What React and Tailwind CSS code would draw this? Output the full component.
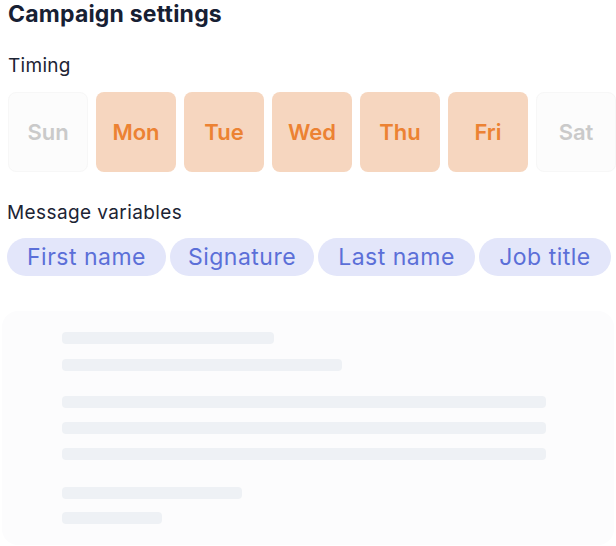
import React from 'react';

const days = [
  { label: 'Sun', active: false },
  { label: 'Mon', active: true },
  { label: 'Tue', active: true },
  { label: 'Wed', active: true },
  { label: 'Thu', active: true },
  { label: 'Fri', active: true },
  { label: 'Sat', active: false },
];

const variables = [
  { label: 'First name', width: 'w-[159px]' },
  { label: 'Signature', width: 'w-[144px]' },
  { label: 'Last name', width: 'w-[157px]' },
  { label: 'Job title', width: 'w-[132px]' },
];

// skeleton lines of the message preview
const lines = [
  { width: 'w-[212px]', gap: 'mt-0' },
  { width: 'w-[280px]', gap: 'mt-[15px]' },
  { width: 'w-[484px]', gap: 'mt-[25px]' },
  { width: 'w-[484px]', gap: 'mt-[14px]' },
  { width: 'w-[484px]', gap: 'mt-[14px]' },
  { width: 'w-[180px]', gap: 'mt-[27px]' },
  { width: 'w-[100px]', gap: 'mt-[13px]' },
];

export default function App() {
  return (
    <div className="w-[616px] h-[546px] bg-white overflow-hidden font-['Inter',sans-serif]">
      <h1 className="pl-2 text-[23px] leading-7 font-bold text-[#172033] tracking-[0.2px]">Campaign settings</h1>

      <p className="pl-2 mt-[26px] text-[19px] leading-6 text-[#1c2434] tracking-[0.3px]">Timing</p>

      {/* Day selector */}
      <div className="flex gap-2 pl-2 mt-[14px]">
        {days.map(day => (
          <div
            key={day.label}
            className={`w-20 h-20 shrink-0 rounded-lg flex items-center justify-center text-[22px] font-semibold ${
              day.active
                ? 'bg-[#f6d6bf] text-[#ec8233]'
                : 'bg-[#fcfcfc] border border-[#f7f7f7] text-[#cacaca]'
            }`}
          >
            {day.label}
          </div>
        ))}
      </div>

      <p className="pl-[7px] mt-[29px] text-[19px] leading-6 text-[#1c2434] tracking-[0.4px]">Message variables</p>

      {/* Variable chips */}
      <div className="flex gap-1 pl-[7px] mt-[13px]">
        {variables.map(v => (
          <div
            key={v.label}
            className={`${v.width} h-[38px] shrink-0 rounded-full bg-[#e3e6fa] text-[#5b6fd8] text-[23px] tracking-[0.5px] flex items-center justify-center`}
          >
            {v.label}
          </div>
        ))}
      </div>

      {/* Preview skeleton */}
      <div className="mx-0.5 mt-[35px] h-[234px] rounded-2xl bg-[#fcfcfd] pl-[60px] pt-[21px]">
        {lines.map((line, i) => (
          <div key={i} className={`${line.width} ${line.gap} h-3 rounded-sm bg-[#eef1f5]`} />
        ))}
      </div>
    </div>
  );
}
